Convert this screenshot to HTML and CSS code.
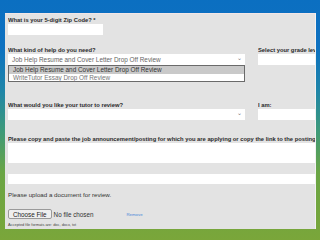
FILE: index.html
```html
<!DOCTYPE html>
<html lang="en">
<head>
  <meta charset="UTF-8">
  <title>Review Request</title>
  <link rel="stylesheet" href="styles.css">
</head>
<body>

  <div class="panel">
    <label class="label">What is your 5-digit Zip Code? *</label>
    <div class="field zip"></div>

    <div class="row first-row">
      <div class="col-main">
        <label class="label">What kind of help do you need?</label>
        <div class="field select">
          <span>Job Help Resume and Cover Letter Drop Off Review</span>
          <span class="chev">&#8964;</span>
        </div>
        <ul class="dropdown">
          <li class="picked">Job Help Resume and Cover Letter Drop Off Review</li>
          <li>WriteTutor Essay Drop Off Review</li>
        </ul>
      </div>
      <div class="col-side">
        <label class="label">Select your grade level</label>
        <div class="field"></div>
      </div>
    </div>

    <div class="row second-row">
      <div class="col-main">
        <label class="label">What would you like your tutor to review?</label>
        <div class="field select">
          <span></span>
          <span class="chev">&#8964;</span>
        </div>
      </div>
      <div class="col-side">
        <label class="label">I am:</label>
        <div class="field"></div>
      </div>
    </div>

    <label class="label posting">Please copy and paste the job announcement/posting for which you are applying or copy the link to the posting</label>
    <div class="field area"></div>
    <div class="field link"></div>

    <p class="upload-title">Please upload a document for review.</p>
    <div class="file-row">
      <span class="file-btn">Choose File</span>
      <span class="file-none">No file chosen</span>
      <a class="remove" href="#">Remove</a>
    </div>
    <p class="formats">Accepted file formats are: doc, docx, txt</p>
  </div>

</body>
</html>
```

FILE: styles.css
```css
* {
  box-sizing: border-box;
}
body {
  margin: 0;
  width: 320px;
  height: 240px;
  overflow: hidden;
  font-family: 'Liberation Sans', Arial, sans-serif;
  color: #222;
  background: linear-gradient(to bottom, #0b6fc1 0%, #0e71c0 20%, #1f86a8 38%, #3f9a78 55%, #6aa544 72%, #7aa63a 100%);
}

.panel {
  position: relative;
  margin: 13px 4px 0 5px;
  height: 216px;
  padding: 3px 0 0 3px;
  background: #e3e3e3;
  border-top: 1px solid #f3e6e6;
  border-right: 1px solid #f2f2f2;
  overflow: hidden;
}

.label {
  display: block;
  height: 7px;
  font-size: 5.8px;
  line-height: 7px;
  font-weight: bold;
  color: #2a2a2a;
  white-space: nowrap;
  overflow: hidden;
}

.field {
  height: 11px;
  background: #fff;
}
.zip {
  width: 95px;
}

.row {
  display: flex;
  gap: 13px;
}
.first-row {
  margin-top: 12px;
}
.second-row {
  margin-top: 37px;
}
.col-main {
  position: relative;
  width: 237px;
}
.col-side {
  flex: 1;
  min-width: 0;
}

.select {
  display: flex;
  justify-content: space-between;
  align-items: center;
  padding: 0 3px 0 4px;
  font-size: 6.4px;
  color: #666;
}
.chev {
  font-size: 6px;
  line-height: 6px;
  margin-top: -3px;
  color: #777;
}

.dropdown {
  position: absolute;
  top: 18px;
  left: 0;
  width: 237px;
  margin: 0;
  padding: 0;
  list-style: none;
  border: 1px solid #6a6a6a;
  background: #fff;
  font-size: 6.4px;
}
.dropdown li {
  height: 7.5px;
  line-height: 7.5px;
  padding-left: 4px;
  color: #777;
}
.dropdown .picked {
  background: #c9c9c9;
  color: #333;
}

.posting {
  margin-top: 16px;
}
.area {
  height: 20px;
}
.link {
  margin-top: 11px;
  height: 10px;
}

.upload-title {
  margin: 7px 0 0;
  font-size: 6.2px;
  line-height: 7px;
  color: #333;
}

.file-row {
  display: flex;
  align-items: center;
  margin-top: 11px;
  height: 10px;
  font-size: 6.3px;
}
.file-btn {
  padding: 1px 4px;
  height: 10px;
  line-height: 8px;
  background: #efefef;
  border: 1px solid #9a9a9a;
  border-radius: 2px;
  color: #222;
}
.file-none {
  margin-left: 2px;
  color: #333;
}
.remove {
  margin-left: 33px;
  font-size: 4.3px;
  color: #4a86d8;
  text-decoration: none;
}

.formats {
  margin: 3px 0 0;
  font-size: 3.9px;
  line-height: 5px;
  color: #444;
}
```
